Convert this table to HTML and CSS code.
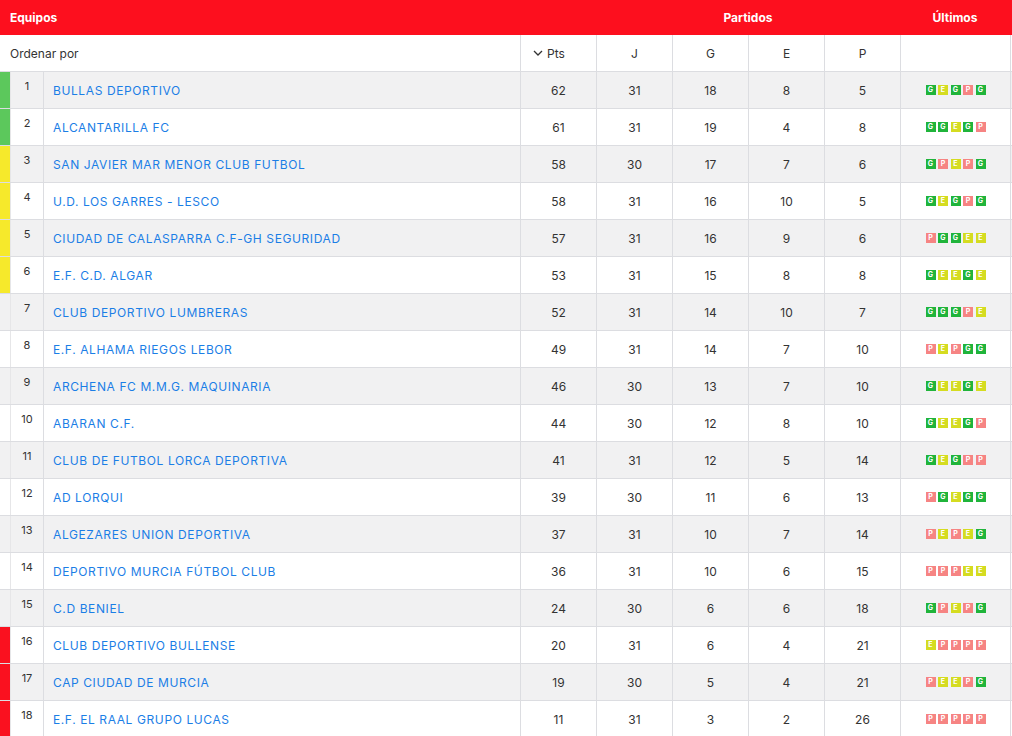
FILE: index.html
```html
<!DOCTYPE html>
<html lang="es">
<head>
<meta charset="utf-8">
<title>Clasificación</title>
<link rel="stylesheet" href="styles.css">
</head>
<body>
<div class="standings">
  <div class="top">
    <div class="top-teams">Equipos</div>
    <div class="top-matches">Partidos</div>
    <div class="top-last">Últimos</div>
  </div>
  <div class="row head">
    <div class="c-order">Ordenar por</div>
    <div class="c-num c-sort"><svg class="chev" viewBox="0 0 10 6" width="10" height="6"><path d="M1 1l4 4 4-4" fill="none" stroke="#333" stroke-width="1.3"/></svg>Pts</div>
    <div class="c-num">J</div>
    <div class="c-num">G</div>
    <div class="c-num">E</div>
    <div class="c-num">P</div>
    <div class="c-last"></div>
    <div></div>
  </div>
  <div id="rows"></div>
</div>
<script src="app.js"></script>
</body>
</html>
```
FILE: app.js
```js
const data = [
  [1,"BULLAS DEPORTIVO",62,31,18,8,5,"GEGPG","up"],
  [2,"ALCANTARILLA FC",61,31,19,4,8,"GGEGP","up"],
  [3,"SAN JAVIER MAR MENOR CLUB FUTBOL",58,30,17,7,6,"GPEPG","po"],
  [4,"U.D. LOS GARRES - LESCO",58,31,16,10,5,"GEGPG","po"],
  [5,"CIUDAD DE CALASPARRA C.F-GH SEGURIDAD",57,31,16,9,6,"PGGEE","po"],
  [6,"E.F. C.D. ALGAR",53,31,15,8,8,"GEEGE","po"],
  [7,"CLUB DEPORTIVO LUMBRERAS",52,31,14,10,7,"GGGPE",""],
  [8,"E.F. ALHAMA RIEGOS LEBOR",49,31,14,7,10,"PEPGG",""],
  [9,"ARCHENA FC M.M.G. MAQUINARIA",46,30,13,7,10,"GEEGE",""],
  [10,"ABARAN C.F.",44,30,12,8,10,"GEEGP",""],
  [11,"CLUB DE FUTBOL LORCA DEPORTIVA",41,31,12,5,14,"GEGPP",""],
  [12,"AD LORQUI",39,30,11,6,13,"PGEGG",""],
  [13,"ALGEZARES UNION DEPORTIVA",37,31,10,7,14,"PEPEG",""],
  [14,"DEPORTIVO MURCIA FÚTBOL CLUB",36,31,10,6,15,"PPPEE",""],
  [15,"C.D BENIEL",24,30,6,6,18,"GPEPG",""],
  [16,"CLUB DEPORTIVO BULLENSE",20,31,6,4,21,"EPPPP","down"],
  [17,"CAP CIUDAD DE MURCIA",19,30,5,4,21,"PEEPG","down"],
  [18,"E.F. EL RAAL GRUPO LUCAS",11,31,3,2,26,"PPPPP","down"]
];
const rows = document.getElementById("rows");
data.forEach((d, i) => {
  const r = document.createElement("div");
  r.className = "row" + (i % 2 === 0 ? " odd" : "");
  const badges = d[7].split("").map(l => `<span class="b b-${l}">${l}</span>`).join("");
  r.innerHTML =
    `<div class="c-strip ${d[8]}"></div>` +
    `<div class="c-pos">${d[0]}</div>` +
    `<div class="c-name"><a href="#">${d[1]}</a></div>` +
    `<div class="c-num">${d[2]}</div>` +
    `<div class="c-num">${d[3]}</div>` +
    `<div class="c-num">${d[4]}</div>` +
    `<div class="c-num">${d[5]}</div>` +
    `<div class="c-num">${d[6]}</div>` +
    `<div class="c-last">${badges}</div><div></div>`;
  rows.appendChild(r);
});
```
FILE: styles.css
```css
* { box-sizing: border-box; }
html, body { margin: 0; padding: 0; background: #fff; }
body {
  font-family: "Inter", "Lato", "Liberation Sans", sans-serif;
  font-size: 12px;
  color: #333;
  overflow: hidden;
}
.top {
  height: 35px;
  background: #fd0f1e;
  color: #fff;
  font-weight: 700;
  font-size: 12px;
  display: grid;
  grid-template-columns: 596px 304px 110px 1fr;
  align-items: center;
}
.top-teams { padding-left: 10px; }
.top-matches { text-align: center; }
.top-last { text-align: center; }

.row {
  display: grid;
  grid-template-columns: 11px 33px 477px 76px 76px 76px 76px 76px 110px 1fr;
  height: 37px;
  border-bottom: 1px solid #dcdde1;
}
.row > div { border-right: 1px solid #dcdde1; }
.row > div:last-child { border-right: none; }
.row.odd { background: #f1f1f2; }
.row.head { background: #fff; }
.c-order {
  grid-column: 1 / 4;
  padding-left: 10px;
  display: flex;
  align-items: center;
  color: #333;
}
.c-num {
  display: flex;
  align-items: center;
  justify-content: center;
  color: #333;
}
.c-sort { justify-content: flex-start; padding-left: 12px; gap: 4px; }
.chev { display: block; }
.c-strip.up { background: #5cc85c; }
.c-strip.po { background: #f6e92b; }
.c-strip.down { background: #fa111f; }
.c-strip { border-right-color: #e6e6e8 !important; }
.c-pos {
  text-align: center;
  padding-top: 7px;
  font-size: 11px;
  line-height: 14px;
}
.c-name {
  display: flex;
  align-items: center;
  padding-left: 9px;
}
.c-name a {
  color: #1b7ee6;
  text-decoration: none;
  letter-spacing: 0.6px;
}
.c-last {
  display: flex;
  align-items: center;
  justify-content: center;
  gap: 2.5px;
}
.b {
  width: 10px;
  height: 10px;
  font-size: 7px;
  font-weight: 700;
  line-height: 10px;
  text-align: center;
  color: #fff;
}
.b-G { background: #20b43b; }
.b-E { background: #d5dc20; }
.b-P { background: #f68483; }
```
